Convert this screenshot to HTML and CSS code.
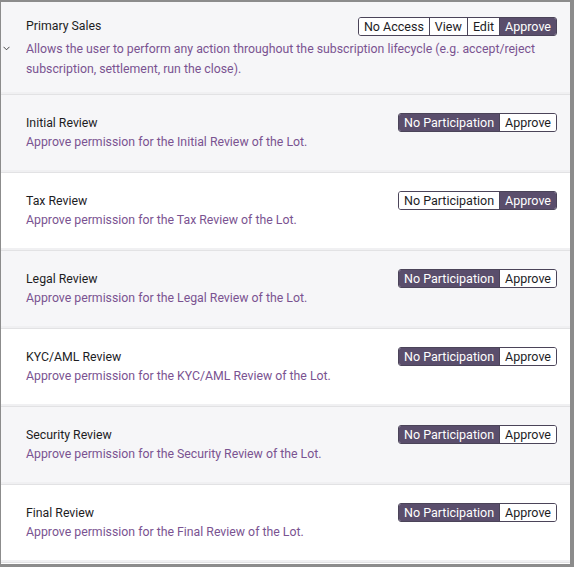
FILE: index.html
```html
<!DOCTYPE html>
<html lang="en">
<head>
  <meta charset="UTF-8" />
  <title>Permissions</title>
  <meta name="viewport" content="width=device-width, initial-scale=1.0" />
  <link rel="stylesheet" href="styles.css">
</head>
<body>
  <div class="frame">
    <div class="perm perm-main shaded">
      <span class="chevron">
        <svg width="7" height="5" viewBox="0 0 7 5"><path d="M0.5 0.8 L3.5 3.8 L6.5 0.8" fill="none" stroke="#333" stroke-width="0.9"/></svg>
      </span>
      <div class="perm-text">
        <div class="perm-title">Primary Sales</div>
        <div class="perm-desc">Allows the user to perform any action throughout the subscription lifecycle (e.g. accept/reject subscription, settlement, run the close).</div>
      </div>
      <div class="seg">
        <span>No Access</span><span>View</span><span>Edit</span><span class="on">Approve</span>
      </div>
    </div>

    <div class="perm shaded">
      <div class="perm-text">
        <div class="perm-title">Initial Review</div>
        <div class="perm-desc">Approve permission for the Initial Review of the Lot.</div>
      </div>
      <div class="seg"><span class="on">No Participation</span><span>Approve</span></div>
    </div>

    <div class="perm">
      <div class="perm-text">
        <div class="perm-title">Tax Review</div>
        <div class="perm-desc">Approve permission for the Tax Review of the Lot.</div>
      </div>
      <div class="seg"><span>No Participation</span><span class="on">Approve</span></div>
    </div>

    <div class="perm shaded">
      <div class="perm-text">
        <div class="perm-title">Legal Review</div>
        <div class="perm-desc">Approve permission for the Legal Review of the Lot.</div>
      </div>
      <div class="seg"><span class="on">No Participation</span><span>Approve</span></div>
    </div>

    <div class="perm">
      <div class="perm-text">
        <div class="perm-title">KYC/AML Review</div>
        <div class="perm-desc">Approve permission for the KYC/AML Review of the Lot.</div>
      </div>
      <div class="seg"><span class="on">No Participation</span><span>Approve</span></div>
    </div>

    <div class="perm shaded">
      <div class="perm-text">
        <div class="perm-title">Security Review</div>
        <div class="perm-desc">Approve permission for the Security Review of the Lot.</div>
      </div>
      <div class="seg"><span class="on">No Participation</span><span>Approve</span></div>
    </div>

    <div class="perm">
      <div class="perm-text">
        <div class="perm-title">Final Review</div>
        <div class="perm-desc">Approve permission for the Final Review of the Lot.</div>
      </div>
      <div class="seg"><span class="on">No Participation</span><span>Approve</span></div>
    </div>
  </div>
</body>
</html>
```

FILE: styles.css
```css
html, body {
  margin: 0;
  padding: 0;
}

body {
  font-family: Roboto, "Liberation Sans", sans-serif;
  font-size: 12.3px;
  color: #1d1d1f;
}

.frame {
  box-sizing: border-box;
  width: 574px;
  height: 567px;
  border-style: solid;
  border-color: #8c8c8c;
  border-width: 2px 4px 3px 1px;
  background: #fff;
  overflow: hidden;
}

.perm {
  position: relative;
  display: flex;
  align-items: flex-start;
  height: 78px;
  box-sizing: border-box;
  padding: 19px 13px 0 25px;
  border-bottom: 1px solid #e2e2e4;
  box-shadow: inset 0 -2px 0 #f0f0f2;
}

.shaded {
  background: #f6f6f8;
}

.perm-main {
  height: 93px;
  padding-top: 15px;
}

.perm-text {
  flex: 1;
  padding-right: 10px;
}

.perm-title {
  line-height: 19px;
}

.perm-desc {
  color: #7a5391;
  line-height: 19px;
}

.perm-main .perm-desc {
  margin-top: 3px;
  line-height: 20px;
}

.perm-main .perm-text {
  padding-right: 0;
}

.chevron {
  position: absolute;
  left: 2px;
  top: 44px;
  line-height: 0;
}

.seg {
  display: flex;
  flex-shrink: 0;
  border: 1px solid #4b4459;
  border-radius: 3px;
  overflow: hidden;
  font-size: 12.5px;
  margin-top: -1px;
}

.perm-main .seg {
  position: absolute;
  right: 13px;
  top: 15px;
  margin-top: 0;
}

.seg span {
  display: block;
  height: 17px;
  line-height: 17px;
  padding: 0 5px;
  background: #fff;
  color: #1d1d1f;
  border-left: 1px solid #4b4459;
}

.seg span:first-child {
  border-left: none;
}

.seg span.on {
  background: #5a4e6c;
  color: #fff;
}
```
